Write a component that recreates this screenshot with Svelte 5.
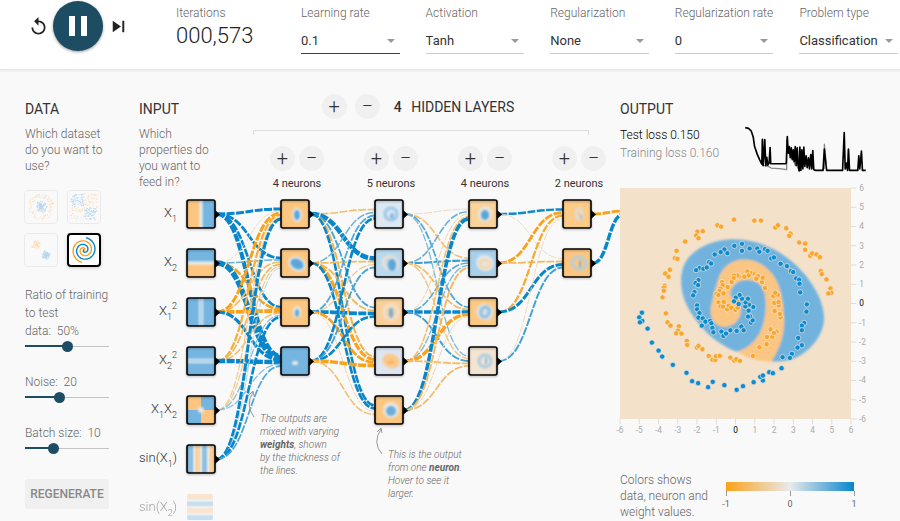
<script lang="ts">
	type Blob = { x: number; y: number; rx: number; ry: number; rot?: number; fill?: string; ring?: string };
	type Neuron = { bg: string; blobs: Blob[] };

	const ORANGE = '#fcc680';
	const BLUE = '#75b5e0';
	const PALE = '#e8eaeb';

	let playing = $state(true);
	let ratio = $state(50);
	let noise = $state(20);
	let batch = $state(10);
	let dataset = $state(3);
	let width = $state(481);

	const params = $state([
		{ id: 'rate', label: 'Learning rate', value: '0.1', options: ['0.01', '0.03', '0.1', '0.3', '1'] },
		{ id: 'activation', label: 'Activation', value: 'Tanh', options: ['ReLU', 'Tanh', 'Sigmoid', 'Linear'] },
		{ id: 'reg', label: 'Regularization', value: 'None', options: ['None', 'L1', 'L2'] },
		{ id: 'regrate', label: 'Regularization rate', value: '0', options: ['0', '0.001', '0.01', '0.1'] },
		{ id: 'problem', label: 'Problem type', value: 'Classification', options: ['Classification', 'Regression'] }
	]);

	// small seeded generator so the thumbnails are stable
	let seed = 7;
	const rnd = () => (seed = (seed * 16807) % 2147483647) / 2147483647;

	const circleDots = Array.from({ length: 200 }, (_, i) => {
		const a = rnd() * Math.PI * 2;
		const r = i < 100 ? rnd() * 6 : 9 + rnd() * 4;
		return { x: 16 + r * Math.cos(a), y: 16 + r * Math.sin(a), c: i < 100 ? BLUE : ORANGE };
	});
	const xorDots = Array.from({ length: 220 }, () => {
		const x = 3 + rnd() * 26;
		const y = 3 + rnd() * 26;
		return { x, y, c: (x < 16) === (y < 16) ? BLUE : ORANGE };
	});
	const gaussDots = Array.from({ length: 160 }, (_, i) => {
		const a = rnd() * Math.PI * 2;
		const r = rnd() * 4.5;
		const o = i % 2 ? [11, 11] : [21, 21];
		return { x: o[0] + r * Math.cos(a), y: o[1] + r * Math.sin(a), c: i % 2 ? ORANGE : BLUE };
	});
	const spiral = (phase: number) => {
		let d = '';
		for (let i = 0; i <= 60; i++) {
			const t = i / 60;
			const a = t * Math.PI * 3.5 + phase;
			d += `${i ? 'L' : 'M'}${(16 + 12.5 * t * Math.sin(a)).toFixed(2)} ${(16 + 12.5 * t * Math.cos(a)).toFixed(2)}`;
		}
		return d;
	};
	const thumbs = [
		{ name: 'Circle', dots: circleDots },
		{ name: 'Exclusive or', dots: xorDots },
		{ name: 'Gaussian', dots: gaussDots },
		{ name: 'Spiral', dots: [] }
	];

	const features = [
		{ base: 'X', sub: '1' },
		{ base: 'X', sub: '2' },
		{ base: 'X', sub: '1', sup: '2' },
		{ base: 'X', sub: '2', sup: '2' },
		{ base: 'X', sub: '1', tail: 'X', tailSub: '2' },
		{ base: 'sin(X', sub: '1', tail: ')' },
		{ base: 'sin(X', sub: '2', tail: ')' }
	];

	const layers: Neuron[][] = [
		[
			{ bg: ORANGE, blobs: [{ x: 16, y: 15, rx: 5, ry: 7, fill: PALE }, { x: 16, y: 15, rx: 3, ry: 5, fill: '#5aa6dc' }] },
			{ bg: ORANGE, blobs: [{ x: 16, y: 15, rx: 9, ry: 7, rot: 28, fill: PALE }, { x: 16, y: 15, rx: 7, ry: 5, rot: 28, fill: '#5aa6dc' }] },
			{ bg: ORANGE, blobs: [{ x: 16, y: 14, rx: 4, ry: 6, fill: PALE }, { x: 16, y: 15, rx: 2, ry: 4, fill: '#5aa6dc' }] },
			{ bg: BLUE, blobs: [{ x: 14, y: 16, rx: 3, ry: 2, fill: '#f0ece6' }] }
		],
		[
			{ bg: '#dce8f2', blobs: [{ x: 16, y: 14, rx: 6, ry: 6, ring: '#9cc6e6' }, { x: 17, y: 16, rx: 2, ry: 3, fill: '#80b8e2' }] },
			{ bg: '#bad9ee', blobs: [{ x: 15, y: 14, rx: 7, ry: 6, rot: 25, ring: '#efe0d0' }, { x: 17, y: 16, rx: 4, ry: 6, fill: '#5aa6dc' }] },
			{ bg: '#fad09a', blobs: [{ x: 16, y: 14, rx: 7, ry: 7, rot: 25, ring: '#eee2d4' }, { x: 16, y: 15, rx: 2, ry: 5, fill: '#6aaede' }] },
			{ bg: '#dde6f0', blobs: [{ x: 16, y: 14, rx: 9, ry: 7, rot: 20, fill: '#fbc98c' }, { x: 16, y: 15, rx: 4, ry: 2, fill: '#f5b86c' }] },
			{ bg: ORANGE, blobs: [{ x: 16, y: 14, rx: 8, ry: 8, rot: 20, fill: '#ebe6df' }, { x: 16, y: 15, rx: 5, ry: 5, fill: '#6aaede' }] }
		],
		[
			{ bg: '#fad29c', blobs: [{ x: 16, y: 14, rx: 7, ry: 8, rot: 20, fill: '#ebe6df' }, { x: 16, y: 15, rx: 4, ry: 5, fill: '#5aa6dc' }] },
			{ bg: '#a9d0ea', blobs: [{ x: 16, y: 14, rx: 9, ry: 8, rot: 20, fill: '#e4e6e8' }, { x: 16, y: 15, rx: 5, ry: 4, rot: 20, ring: '#f6d6ac' }] },
			{ bg: '#fcc985', blobs: [{ x: 16, y: 14, rx: 9, ry: 8, rot: 20, fill: '#e0e2e2' }, { x: 16, y: 14, rx: 4, ry: 5, rot: 20, ring: '#86bde4' }] },
			{ bg: '#f4e4d2', blobs: [{ x: 16, y: 14, rx: 6, ry: 6, rot: 20, ring: '#a8cbe4' }, { x: 17, y: 14, rx: 1, ry: 4, fill: '#7fb6e0' }] }
		],
		[
			{ bg: '#fccb88', blobs: [{ x: 16, y: 14, rx: 3, ry: 5, ring: '#dcdedc' }, { x: 18, y: 17, rx: 1, ry: 3, fill: '#98c2de' }] },
			{ bg: ORANGE, blobs: [{ x: 16, y: 14, rx: 7, ry: 6, rot: 20, ring: '#b4cfdc' }, { x: 17, y: 15, rx: 1, ry: 4, fill: '#74b0dc' }] }
		]
	];

	// weights[l][src][dst], sign picks the hue and magnitude the thickness
	const weights = [
		[
			[2.8, 2.5, 2.3, 4],
			[-0.4, 1.1, -2.4, 5.5],
			[-2.8, -1.3, -3.8, 3],
			[-1.9, -1.4, -1.2, 4.4],
			[-0.8, -0.8, 0.8, 0.8],
			[2.8, 0.4, 2.4, 1.4]
		],
		[
			[-1.2, 4.5, 1.5, -1.7, 2.3],
			[1.1, -1.4, -1.5, -3, 2.4],
			[1.4, -0.8, 3.6, -2.5, -0.5],
			[2.4, 1.5, 2.4, -3.5, -1.2]
		],
		[
			[-0.4, -1.2, 1.4, 0.9],
			[1.2, 1.7, -1.4, -1],
			[-0.5, 1.3, 3.4, 1.6],
			[-1.2, 0.9, -3.2, -1.4],
			[3.4, -1.5, -0.5, -1.4]
		],
		[
			[2.2, -0.4],
			[-2.6, -1.4],
			[-2, 2.8],
			[-0.4, 1.6]
		],
		[[-2.6], [3.2]]
	];

	const TOP = 115;
	const nodeY = (row: number) => TOP + row * 49;
	let step = $derived((width - 105) / 4);
	const nodeX = (col: number) => 62 + col * step;

	function mix(w: number) {
		const t = Math.min(1, 0.15 + Math.abs(w) / 2.7);
		const to = w < 0 ? [250, 162, 27] : [8, 134, 204];
		return `rgb(${[232, 234, 235].map((v, i) => Math.round(v + (to[i] - v) * t)).join(' ')})`;
	}

	let links = $derived(
		weights.flatMap((rows, l) =>
			rows.flatMap((row, s) =>
				row.map((w, d) => {
					const last = l === 4;
					const x0 = nodeX(l) + 16;
					const x1 = last ? width + 4 : nodeX(l + 1) - 14;
					const y0 = nodeY(s);
					const y1 = last ? nodeY(0) + s * 3 - 3 : nodeY(d) + ((s - (rows.length - 1) / 2) / rows.length) * 12;
					const mid = (x0 + x1) / 2;
					return { d: `M${x0} ${y0}C${mid} ${y0} ${mid} ${y1} ${x1} ${y1}`, w };
				})
			)
		)
	);

	const ticks = [-6, -5, -4, -3, -2, -1, 0, 1, 2, 3, 4, 5, 6];

	// sample points in plot units, 58 per axis step
	const orangePoints = [
		[374, 90], [435, 93], [455, 93], [324, 107], [335, 111], [498, 114], [506, 107], [531, 116], [544, 132], [540, 139],
		[264, 126], [280, 125], [260, 138], [267, 146], [227, 156], [570, 159], [588, 162], [588, 181], [201, 184], [196, 206],
		[204, 208], [603, 199], [609, 192], [622, 195], [632, 203], [181, 241], [167, 252], [177, 262], [635, 245], [638, 254],
		[652, 270], [165, 289], [163, 295], [163, 304], [159, 324], [664, 297], [667, 310], [658, 312], [169, 372], [174, 399],
		[183, 409], [208, 411], [205, 424], [200, 432], [216, 433], [232, 455], [233, 467], [262, 475], [267, 470], [279, 480],
		[298, 500], [309, 512], [318, 512], [320, 501], [331, 500], [363, 505], [375, 514], [381, 510], [392, 515], [431, 500],
		[450, 474], [472, 465], [473, 443], [489, 443], [484, 420], [502, 427], [494, 431], [514, 384], [512, 374], [496, 365],
		[509, 348], [495, 341], [508, 338], [492, 320], [506, 316], [498, 310], [467, 296], [458, 278], [460, 265], [446, 260],
		[441, 268], [431, 252], [423, 250], [414, 246], [418, 258], [405, 262], [389, 261], [384, 258], [374, 258], [373, 266],
		[367, 278], [355, 293], [338, 278], [340, 287], [333, 298], [330, 305], [321, 313], [327, 317], [342, 312], [327, 339],
		[333, 351], [343, 338], [341, 352], [353, 360], [358, 349], [366, 355], [378, 362], [385, 355], [384, 337]
	];
	const bluePoints = [
		[398, 163], [375, 169], [398, 184], [421, 177], [444, 177], [450, 187], [467, 179], [475, 184], [345, 180], [334, 188],
		[354, 191], [316, 195], [486, 207], [494, 204], [514, 223], [533, 230], [299, 218], [305, 222], [270, 236], [260, 242],
		[282, 238], [292, 234], [545, 245], [552, 248], [561, 267], [570, 271], [571, 283], [573, 309], [267, 272], [258, 281],
		[266, 287], [255, 308], [251, 318], [263, 348], [263, 360], [270, 371], [267, 385], [280, 387], [288, 397], [277, 409],
		[302, 395], [306, 402], [309, 416], [312, 429], [336, 427], [342, 440], [350, 433], [363, 423], [382, 425], [396, 412],
		[403, 423], [425, 400], [430, 393], [422, 381], [416, 382], [418, 364], [432, 353], [419, 346], [408, 351], [409, 339],
		[416, 328], [398, 328], [391, 317], [379, 325], [374, 336], [388, 344], [593, 345], [592, 367], [585, 401], [578, 409],
		[578, 423], [567, 446], [578, 468], [565, 475], [548, 494], [542, 506], [520, 504], [97, 370], [89, 384], [98, 395],
		[91, 399], [114, 418], [127, 460], [147, 484], [158, 502], [190, 527], [231, 551], [248, 576], [266, 582], [296, 594],
		[310, 578], [345, 588], [382, 602], [401, 591], [433, 579], [461, 574], [453, 563], [461, 559], [480, 549], [491, 552], [517, 537]
	];
</script>

<header>
	<div class="transport">
		<button class="icon" aria-label="Reset">
			<svg width="21" height="21" viewBox="0 0 24 24"><path d="M12 5V1L7 6l5 5V7c3.31 0 6 2.69 6 6s-2.69 6-6 6-6-2.69-6-6H4c0 4.42 3.58 8 8 8s8-3.58 8-8-3.58-8-8-8z" /></svg>
		</button>
		<button class="play" aria-label="Run/Pause" onclick={() => (playing = !playing)}>
			<svg width="50" height="50" viewBox="0 0 50 50">
				{#if playing}
					<path d="M16 15h6v20h-6zM28 15h6v20h-6z" />
				{:else}
					<path d="M18 13v24l19-12z" />
				{/if}
			</svg>
		</button>
		<button class="icon" aria-label="Step">
			<svg width="23" height="23" viewBox="0 0 24 24"><path d="M6 18l8.5-6L6 6v12zM16 6v12h2V6h-2z" /></svg>
		</button>
	</div>
	<div class="iterations">
		<span class="caption">Iterations</span>
		<output>000,573</output>
	</div>
	{#each params as p (p.id)}
		<div class="param">
			<label class="caption" for={p.id}>{p.label}</label>
			<div class="select" class:focused={p.id === 'rate'}>
				<select id={p.id} bind:value={p.value}>
					{#each p.options as o}<option>{o}</option>{/each}
				</select>
			</div>
		</div>
	{/each}
</header>

<main>
	<section class="data">
		<h2>Data</h2>
		<p>Which dataset do you want to use?</p>
		<div class="thumbs">
			{#each thumbs as t, i}
				<button class="thumb" class:active={dataset === i} aria-label={t.name} onclick={() => (dataset = i)}>
					<svg viewBox="0 0 32 32">
						{#each t.dots as dot}
							<rect x={dot.x - 0.5} y={dot.y - 0.5} width="1" height="1" fill={dot.c} />
						{:else}
							<path d={spiral(1.4)} fill="none" stroke="#faa21b" stroke-width="1.4" />
							<path d={spiral(1.4 + Math.PI)} fill="none" stroke="#0886cc" stroke-width="1.4" />
						{/each}
					</svg>
				</button>
			{/each}
		</div>
		<div class="slider">
			<label for="ratio">Ratio of training to test data:&nbsp;&nbsp;{ratio}%</label>
			<input id="ratio" type="range" min="10" max="90" step="10" bind:value={ratio} style="--fill: {((ratio - 10) / 80) * 100}%" />
		</div>
		<div class="slider">
			<label for="noise">Noise:&nbsp; {noise}</label>
			<input id="noise" type="range" min="0" max="50" step="5" bind:value={noise} style="--fill: {noise * 2}%" />
		</div>
		<div class="slider">
			<label for="batch">Batch size:&nbsp; {batch}</label>
			<input id="batch" type="range" min="1" max="30" bind:value={batch} style="--fill: {((batch - 1) / 29) * 100}%" />
		</div>
		<button class="regenerate">Regenerate</button>
	</section>

	<section class="network" bind:clientWidth={width}>
		<svg class="canvas" aria-label="Network diagram">
			<defs>
				<filter id="soft" x="-30%" y="-30%" width="160%" height="160%"><feGaussianBlur stdDeviation="1" /></filter>
				<linearGradient id="f0">
					<stop offset="0.38" stop-color={ORANGE} /><stop offset="0.5" stop-color={PALE} /><stop offset="0.62" stop-color={BLUE} />
				</linearGradient>
				<linearGradient id="f1" x2="0" y2="1">
					<stop offset="0.38" stop-color={BLUE} /><stop offset="0.5" stop-color={PALE} /><stop offset="0.62" stop-color={ORANGE} />
				</linearGradient>
				<linearGradient id="f2">
					<stop offset="0.36" stop-color={BLUE} /><stop offset="0.44" stop-color="#b4d5ec" /><stop offset="0.56" stop-color="#b4d5ec" /><stop offset="0.64" stop-color={BLUE} />
				</linearGradient>
				<linearGradient id="f3" x2="0" y2="1">
					<stop offset="0.36" stop-color={BLUE} /><stop offset="0.44" stop-color="#b4d5ec" /><stop offset="0.56" stop-color="#b4d5ec" /><stop offset="0.64" stop-color={BLUE} />
				</linearGradient>
				<linearGradient id="f5">
					<stop offset="0.18" stop-color="#8cc0e4" /><stop offset="0.26" stop-color={PALE} /><stop offset="0.34" stop-color="#fbcf98" />
					<stop offset="0.44" stop-color="#f7d5ac" /><stop offset="0.5" stop-color={PALE} /><stop offset="0.58" stop-color="#8cc0e4" />
					<stop offset="0.66" stop-color="#8cc0e4" /><stop offset="0.76" stop-color={PALE} /><stop offset="0.84" stop-color="#fbcf98" />
				</linearGradient>
				<linearGradient id="f6" x2="0" y2="1">
					<stop offset="0.16" stop-color="#fbcf98" /><stop offset="0.25" stop-color={PALE} /><stop offset="0.33" stop-color="#8cc0e4" />
					<stop offset="0.43" stop-color="#8cc0e4" /><stop offset="0.5" stop-color={PALE} /><stop offset="0.58" stop-color="#fbcf98" />
					<stop offset="0.7" stop-color="#fbcf98" /><stop offset="0.78" stop-color={PALE} /><stop offset="0.86" stop-color="#8cc0e4" />
				</linearGradient>
			</defs>

			{#each links as link}
				<path class="link" d={link.d} stroke={mix(link.w)} stroke-width={0.5 + Math.abs(link.w) * 0.9} />
			{/each}

			{#each features as f, i}
				<g class:off={i === 6}>
					<text class="feature" x="38" y={nodeY(i) + 3} text-anchor="end"
						>{f.base}<tspan class="script" dy="5">{f.sub}</tspan>{#if f.sup}<tspan class="script" dy="-11">{f.sup}</tspan>{/if}{#if f.tail}<tspan dy="-5">{f.tail}</tspan>{/if}{#if f.tailSub}<tspan class="script" dy="5">{f.tailSub}</tspan>{/if}</text>
					<g transform="translate({nodeX(0) - 14} {nodeY(i) - 14})">
						{#if i === 6}
							<rect width="26" height="26" rx="2" fill="url(#f6)" />
						{:else}
							<path d="M28 10l5 4.500-5 4.500z" />
							{#if i === 4}
								<rect width="28" height="28" fill={ORANGE} />
								<path d="M14 0h14v14H14zM0 14h14v14H0z" fill={BLUE} />
								<circle cx="14" cy="14" r="3" fill={PALE} filter="url(#soft)" />
							{:else}
								<rect width="28" height="28" fill="url(#f{i})" />
							{/if}
							<rect class="frame" width="28" height="28" rx="2" />
						{/if}
					</g>
				</g>
			{/each}

			{#each layers as layer, l}
				{#each layer as n, i}
					<g transform="translate({nodeX(l + 1) - 14} {nodeY(i) - 14})">
						<path d="M28 10l5 4.500-5 4.500z" />
						<rect width="28" height="28" fill={n.bg} />
						{#each n.blobs as b}
							<ellipse
								cx={b.x}
								cy={b.y}
								rx={b.rx}
								ry={b.ry}
								transform="rotate({b.rot ?? 0} {b.x} {b.y})"
								fill={b.fill ?? 'none'}
								stroke={b.ring ?? 'none'}
								stroke-width="3"
								filter="url(#soft)"
							/>
						{/each}
						<rect class="frame" width="28" height="28" rx="2" />
					</g>
				{/each}
			{/each}

			<g class="pointer">
				<path d="M{nodeX(1) - 41} 318q-9 -12 -1 -25m-4 3l4 -4 1 5" />
				<path d="M{nodeX(2) - 7} 355q-10 -11 -1 -25m-4 3l4 -4 1 5" />
			</g>
		</svg>

		<div class="input">
			<h2>Input</h2>
			<p>Which properties do you want to feed in?</p>
		</div>
		<div class="hidden">
			<div class="depth">
				<button class="round" aria-label="Add layer">+</button>
				<button class="round" aria-label="Remove layer">−</button>
				<h2><strong>{layers.length}</strong> Hidden layers</h2>
			</div>
			<div class="bracket"></div>
			<div class="columns">
				{#each layers as layer}
					<div class="column">
						<button class="round" aria-label="Add neuron">+</button>
						<button class="round" aria-label="Remove neuron">−</button>
						<span>{layer.length} neurons</span>
					</div>
				{/each}
			</div>
		</div>

		<p class="callout" style="left: {nodeX(1) - 35}px; top: 313px">
			The outputs are mixed with varying <b>weights</b>, shown by&nbsp;the&nbsp;thickness of the lines.
		</p>
		<p class="callout" style="left: {nodeX(2) - 1}px; top: 349px">This is the output from one <b>neuron</b>. Hover to see it larger.</p>
	</section>

	<section class="output">
		<h2>Output</h2>
		<div class="stats">
			<div>
				<div class="test">Test loss 0.150</div>
				<div class="train">Training loss 0.160</div>
			</div>
			<svg class="losses" viewBox="404 110 364 142">
				<path stroke="#888" stroke-width="4" d="M452 222l10 8 12 2 8 5 25 2 22 3V150M455 150l3 80M536 190l12 20 8 20M643 240v-75l6 60M715 240v-60" />
				<path
					stroke="#000"
					stroke-width="5"
					d="M404 115L414 117 422 125 428 143 432 171 440 195 448 213 454 225 456 150 458 230 461 190 463 151 466 230 469 205 472 228 476 222 479 175 481 224 525 224 528 222 531 142 534 192 537 172 540 206 543 176 546 212 549 182 552 218 555 172 558 230 561 176 564 234 567 246 569 174 572 244 575 182 578 240 581 174 584 232 588 200 591 236 595 206 598 240 602 196 605 240 608 184 611 242 617 244 639 244 643 180 646 212 650 244 698 244 703 130 706 240 710 222 713 244 716 180 719 244 744 244 747 200 750 240 755 186 758 244 768 244"
				/>
			</svg>
		</div>
		<svg class="plot" viewBox="31 -5 740 740">
			<defs>
				<filter id="edge" x="-5%" y="-5%" width="110%" height="110%"><feGaussianBlur stdDeviation="3.500" /></filter>
			</defs>
			<rect x="31" y="-5" width="695" height="695" fill="#f4e1c9" />
			<g filter="url(#edge)">
				<path
					fill="#72b3de"
					d="M375 149C450 149 515 185 560 227C610 275 645 335 645 388C642 440 605 480 570 500C545 515 515 518 486 516L388 486C375 490 345 470 322 455C285 430 245 380 226 335C212 295 210 255 226 222C250 175 315 149 375 149Z"
				/>
				<path
					fill="#fbc683"
					d="M386 487C420 474 440 453 454 425C468 395 473 350 466 312C460 285 438 272 412 272C385 272 365 290 363 312C362 330 393 340 395 357C398 385 375 413 345 413C315 411 301 385 304 355C310 325 316 300 326 270C338 230 370 210 405 210C445 210 480 235 500 270C520 305 527 370 524 415C520 455 505 490 486 517C450 518 410 507 386 487Z"
				/>
			</g>
			<g class="points" fill="#faa62a">
				{#each orangePoints as [x, y]}<circle cx={x} cy={y} r="8" />{/each}
			</g>
			<g class="points" fill="#0c8bd0">
				{#each bluePoints as [x, y]}<circle cx={x} cy={y} r="8" />{/each}
			</g>
			{#each ticks as t}
				<g class="tick" class:zero={t === 0}>
					<path d="M{378.5 + t * 57.9} 690v16M726 {342.5 - t * 57.9}h16" />
					<text x={378.5 + t * 57.9} y="732" text-anchor="middle">{t}</text>
					<text x={t < 0 ? 750 : 751} y={351 - t * 57.9}>{t}</text>
				</g>
			{/each}
		</svg>
		<div class="legend">
			<p>Colors shows data, neuron and weight values.</p>
			<div class="scale">
				<div class="ramp"></div>
				<div class="marks"><span>-1</span><span>0</span><span>1</span></div>
			</div>
		</div>
	</section>
</main>

<style>
	:global(body) {
		background: #f9f9f9;
		font-family: Roboto, 'Liberation Sans', sans-serif;
		color: #333;
	}
	h2, p { margin: 0; font-weight: 400; }
	h2 { font-size: 14px; line-height: 20px; text-transform: uppercase; color: #333; }
	p { font-size: 12px; line-height: 16px; font-weight: 300; color: #666; }
	button { border: none; background: none; padding: 0; font: inherit; cursor: pointer; }
	svg { display: block; }

	header {
		display: grid; grid-template-columns: 122px 99px repeat(5, 1fr); column-gap: 26px;
		height: 69px; padding: 0 2px 0 28px;
		background: #fff; border-bottom: 1px solid #e8e8e8; box-shadow: 0 1px 2px rgba(0, 0, 0, 0.08);
		position: relative;
	}
	.transport { display: flex; align-items: center; gap: 4px; height: 50px; margin-top: 1px; }
	.icon { fill: #222; }
	.play {
		border-radius: 50%; background: #1d4d62; fill: #fff;
		box-shadow: 0 1px 3px rgba(0, 0, 0, 0.4);
	}
	.caption { display: block; margin-top: 5px; font-size: 12px; line-height: 16px; font-weight: 300; color: #666; white-space: nowrap; }
	output { display: block; font-size: 22px; line-height: 30px; font-weight: 300; color: #222; }
	.param { min-width: 0; }
	.select { position: relative; margin-top: 7px; border-bottom: 1px solid #ccc; }
	.select.focused { border-color: #1d4d62; }
	.select::after {
		content: ''; position: absolute; right: 5px; top: 11px; pointer-events: none;
		border: 4px solid transparent; border-top-color: #999; border-bottom: 0;
	}
	select {
		appearance: none; width: 100%; height: 25px; padding: 0; border: none; outline: none;
		background: transparent; color: #333; font: 400 13px Roboto, 'Liberation Sans', sans-serif;
	}

	main { display: flex; padding: 29px 34px 0 25px; }
	.data { flex: 0 0 84px; margin-right: 30px; }
	.data p, .input p { margin-top: 7px; }
	.thumbs { display: grid; grid-template-columns: 32px 32px; gap: 11px; margin: 17px 0 20px; }
	.thumb { height: 32px; border-radius: 3px; outline: 1px solid #ddd; opacity: 0.5; overflow: hidden; }
	.thumb.active { opacity: 1; background: #fff; outline: 2px solid #000; outline-offset: -1px; box-shadow: 0 1px 4px rgba(0, 0, 0, 0.3); }
	.slider { margin-bottom: 21px; font-size: 12px; line-height: 18px; font-weight: 300; color: #666; }
	.slider label { display: block; }
	input[type='range'] {
		appearance: none; display: block; width: 100%; height: 12px; margin: 0;
		background: linear-gradient(#1d4d62, #1d4d62) left center / var(--fill) 2px no-repeat,
			linear-gradient(#c4c4c4, #c4c4c4) center / 100% 1px no-repeat;
	}
	input[type='range']::-webkit-slider-thumb { appearance: none; width: 11px; height: 11px; border-radius: 50%; background: #1d4d62; }
	.regenerate {
		width: 84px; height: 30px; margin-top: 4px; border-radius: 2px; background: #f0f0f0;
		font-size: 12px; font-weight: 500; color: #888; text-transform: uppercase;
	}

	.network { position: relative; flex: 1; display: flex; align-items: flex-start; min-width: 0; }
	.canvas { position: absolute; inset: 0; width: 100%; height: 422px; overflow: visible; }
	.link { fill: none; stroke-dasharray: 8 1.5; }
	.feature { font-size: 13px; font-weight: 300; fill: #333; }
	.script { font-size: 9px; }
	.off { opacity: 0.45; }
	.frame { fill: none; stroke: #000; stroke-width: 1.6; filter: drop-shadow(0 1px 1px rgba(0, 0, 0, 0.3)); }
	.pointer { fill: none; stroke: #999; }
	.input { flex: 0 0 76px; margin-right: 35px; }
	.hidden { position: relative; flex: 1; margin: -5px -6px 0 0; }
	.depth { display: flex; align-items: center; justify-content: center; gap: 8px; margin-right: 40px; }
	.depth h2 { margin-left: 6px; }
	.depth strong { margin-right: 6px; font-weight: 500; }
	.round {
		width: 25px; height: 25px; border-radius: 50%; background: #f0f0f0;
		font-size: 20px; line-height: 25px; font-weight: 300; color: #333;
	}
	.bracket { height: 4px; margin: 11px 37px 0 3px; border: 1px solid #ddd; border-bottom: 0; }
	.columns { display: flex; margin-top: 11px; }
	.column { flex: 1; display: flex; flex-wrap: wrap; justify-content: center; column-gap: 4px; }
	.column span { flex: 0 0 100%; margin-top: 5px; text-align: center; font-size: 11px; line-height: 16px; }
	.callout { position: absolute; width: 84px; font-size: 10px; line-height: 13px; font-style: italic; }
	.callout b { font-weight: 700; }

	.output { position: relative; flex: 0 0 246px; }
	.stats { display: flex; justify-content: space-between; margin-top: 7px; font-size: 12px; line-height: 18px; font-weight: 300; }
	.test { color: #000; }
	.train { color: #888; }
	.losses { width: 121px; height: 47px; fill: none; stroke-linejoin: round; }
	.plot { width: 100%; margin-top: 15px; overflow: visible; }
	.points { stroke: #f4ece2; stroke-width: 2; }
	.tick path { stroke: #ddd; stroke-width: 3; fill: none; }
	.tick text { font-size: 25px; fill: #aaa; }
	.tick.zero text { fill: #000; }
	.legend { display: flex; justify-content: space-between; margin: 38px 12px 0 0; }
	.legend p { width: 92px; }
	.scale { width: 128px; margin-top: 10px; }
	.ramp { height: 9px; background: linear-gradient(90deg, #faa21b, #e8eaeb, #0886cc); }
	.marks { display: flex; justify-content: space-between; margin: 0 -10px; font-size: 9px; line-height: 16px; color: #666; }
	.marks span { width: 20px; text-align: center; }
	.marks span::before { content: ''; display: block; width: 1px; height: 5px; margin: 0 auto; background: #999; }
</style>
